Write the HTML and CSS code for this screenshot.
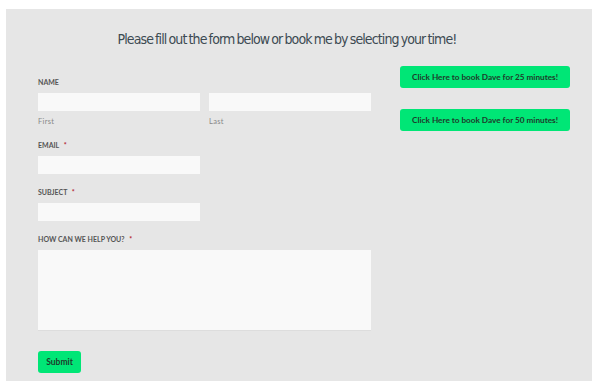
FILE: index.html
```html
<!DOCTYPE html>
<html lang="en">
<head>
    <meta charset="UTF-8">
    <meta name="viewport" content="width=device-width, initial-scale=1.0">
    <title>Contact Dave</title>
    <link rel="stylesheet" href="styles.css">
</head>
<body>

    <div class="panel">
        <h1 class="title">Please fill out the form below or book me by selecting your time!</h1>

        <div class="columns">
            <form class="contact-form" onsubmit="return false;">
                <div class="field">
                    <label class="field-label">NAME</label>
                    <div class="name-row">
                        <div class="name-part">
                            <input type="text" class="text-input">
                            <span class="sub-label">First</span>
                        </div>
                        <div class="name-part">
                            <input type="text" class="text-input">
                            <span class="sub-label">Last</span>
                        </div>
                    </div>
                </div>

                <div class="field">
                    <label class="field-label">EMAIL <span class="req">*</span></label>
                    <input type="email" class="text-input half">
                </div>

                <div class="field">
                    <label class="field-label">SUBJECT <span class="req">*</span></label>
                    <input type="text" class="text-input half">
                </div>

                <div class="field">
                    <label class="field-label">HOW CAN WE HELP YOU? <span class="req">*</span></label>
                    <textarea class="text-area"></textarea>
                </div>

                <button type="submit" class="submit-btn">Submit</button>
            </form>

            <div class="booking">
                <a class="book-btn" href="#">Click Here to book Dave for 25 minutes!</a>
                <a class="book-btn" href="#">Click Here to book Dave for 50 minutes!</a>
            </div>
        </div>
    </div>

</body>
</html>
```

FILE: styles.css
```css
body {
    margin: 0;
    background: white;
    font-family: Lato, "Open Sans", sans-serif;
}
.panel {
    margin: 9px 0 0 6px;
    width: 586px;
    height: 372px;
    box-sizing: border-box;
    background: #e6e6e6;
    padding: 21px 22px 0 32px;
}
.title {
    margin: 0;
    padding-right: 34px;
    text-align: center;
    font-family: "DejaVu Sans", sans-serif;
    font-stretch: condensed;
    font-weight: normal;
    font-size: 14px;
    letter-spacing: -0.9px;
    word-spacing: -1px;
    color: #3c4a52;
    line-height: 18px;
}
.columns {
    display: grid;
    grid-template-columns: 333px 170px;
    column-gap: 29px;
    margin-top: 29px;
}
.contact-form {
    display: flex;
    flex-direction: column;
}
.field {
    display: flex;
    flex-direction: column;
    margin-bottom: 13px;
}
.field-label {
    font-size: 7px;
    font-weight: bold;
    color: #555;
    line-height: 10px;
    margin-bottom: 6px;
}
.req {
    color: #b3202a;
    margin-left: 3px;
}
.name-row {
    display: flex;
    gap: 9px;
}
.name-part {
    display: flex;
    flex-direction: column;
    width: 162px;
}
.sub-label {
    font-size: 7.5px;
    color: #888;
    margin-top: 6px;
    line-height: 10px;
    letter-spacing: 0.3px;
}
.text-input {
    box-sizing: border-box;
    height: 18px;
    border: none;
    background: #f9f9f9;
    margin: 0;
    padding: 0 4px;
}
.half {
    width: 162px;
}
.text-area {
    box-sizing: border-box;
    width: 333px;
    height: 81px;
    border: none;
    border-bottom: 1px solid #ddd;
    background: #f9f9f9;
    resize: none;
    margin: 0;
}
.submit-btn {
    align-self: flex-start;
    margin-top: 7px;
    width: 43px;
    height: 22px;
    padding: 0;
    border: none;
    border-radius: 3px;
    background: #00e676;
    color: #1f3b2b;
    font-family: Lato, "Open Sans", sans-serif;
    font-size: 8.5px;
    font-weight: bold;
    cursor: pointer;
}
.booking {
    display: flex;
    flex-direction: column;
    gap: 21px;
    margin-top: -11px;
}
.book-btn {
    display: block;
    height: 22px;
    line-height: 22px;
    text-align: center;
    background: #00e676;
    border-radius: 3px;
    color: #1f3b2b;
    font-size: 8.2px;
    font-weight: bold;
    text-decoration: none;
}
```
